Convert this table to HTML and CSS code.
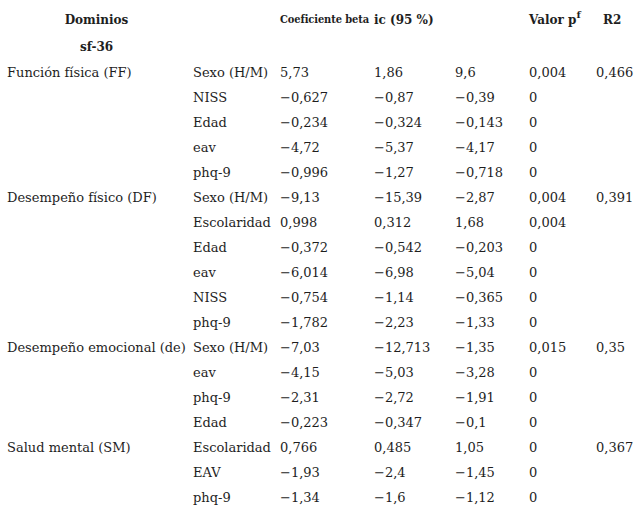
FILE: index.html
```html
<!DOCTYPE html>
<html lang="es">
<head>
<meta charset="utf-8">
<link rel="stylesheet" href="styles.css">
</head>
<body>
<table class="tbl">
  <colgroup>
    <col class="c1"><col class="c2"><col class="c3"><col class="c4"><col class="c5"><col class="c6"><col class="c7">
  </colgroup>
  <thead>
    <tr class="h1">
      <th class="center">Dominios</th>
      <th></th>
      <th class="tight">Coeficiente beta</th>
      <th colspan="2">ic (95 %)</th>
      <th>Valor p<sup>f</sup></th>
      <th class="r2">R2</th>
    </tr>
    <tr class="h2">
      <th class="center">sf-36</th>
      <th></th><th></th><th></th><th></th><th></th><th></th>
    </tr>
  </thead>
  <tbody>
    <tr><td>Función física (FF)</td><td>Sexo (H/M)</td><td>5,73</td><td>1,86</td><td>9,6</td><td>0,004</td><td>0,466</td></tr>
    <tr><td></td><td>NISS</td><td>−0,627</td><td>−0,87</td><td>−0,39</td><td>0</td><td></td></tr>
    <tr><td></td><td>Edad</td><td>−0,234</td><td>−0,324</td><td>−0,143</td><td>0</td><td></td></tr>
    <tr><td></td><td>eav</td><td>−4,72</td><td>−5,37</td><td>−4,17</td><td>0</td><td></td></tr>
    <tr><td></td><td>phq-9</td><td>−0,996</td><td>−1,27</td><td>−0,718</td><td>0</td><td></td></tr>
    <tr><td>Desempeño físico (DF)</td><td>Sexo (H/M)</td><td>−9,13</td><td>−15,39</td><td>−2,87</td><td>0,004</td><td>0,391</td></tr>
    <tr><td></td><td>Escolaridad</td><td>0,998</td><td>0,312</td><td>1,68</td><td>0,004</td><td></td></tr>
    <tr><td></td><td>Edad</td><td>−0,372</td><td>−0,542</td><td>−0,203</td><td>0</td><td></td></tr>
    <tr><td></td><td>eav</td><td>−6,014</td><td>−6,98</td><td>−5,04</td><td>0</td><td></td></tr>
    <tr><td></td><td>NISS</td><td>−0,754</td><td>−1,14</td><td>−0,365</td><td>0</td><td></td></tr>
    <tr><td></td><td>phq-9</td><td>−1,782</td><td>−2,23</td><td>−1,33</td><td>0</td><td></td></tr>
    <tr><td>Desempeño emocional (de)</td><td>Sexo (H/M)</td><td>−7,03</td><td>−12,713</td><td>−1,35</td><td>0,015</td><td>0,35</td></tr>
    <tr><td></td><td>eav</td><td>−4,15</td><td>−5,03</td><td>−3,28</td><td>0</td><td></td></tr>
    <tr><td></td><td>phq-9</td><td>−2,31</td><td>−2,72</td><td>−1,91</td><td>0</td><td></td></tr>
    <tr><td></td><td>Edad</td><td>−0,223</td><td>−0,347</td><td>−0,1</td><td>0</td><td></td></tr>
    <tr><td>Salud mental (SM)</td><td>Escolaridad</td><td>0,766</td><td>0,485</td><td>1,05</td><td>0</td><td>0,367</td></tr>
    <tr><td></td><td>EAV</td><td>−1,93</td><td>−2,4</td><td>−1,45</td><td>0</td><td></td></tr>
    <tr><td></td><td>phq-9</td><td>−1,34</td><td>−1,6</td><td>−1,12</td><td>0</td><td></td></tr>
  </tbody>
</table>
</body>
</html>
```
FILE: styles.css
```css
html, body {
  margin: 0;
  padding: 0;
  background: #fff;
}
body {
  font-family: "DejaVu Serif", "Liberation Serif", serif;
  font-size: 13px;
  color: #1e1e1e;
}
.tbl {
  border-collapse: collapse;
  table-layout: fixed;
  width: 643px;
  margin-top: 6px;
}
.c1 { width: 193px; }
.c2 { width: 87px; }
.c3 { width: 94px; }
.c4 { width: 81px; }
.c5 { width: 74px; }
.c6 { width: 67px; }
.c7 { width: 47px; }
th, td {
  padding: 0;
  text-align: left;
  white-space: nowrap;
  vertical-align: middle;
}
td:first-child {
  padding-left: 7px;
}
th {
  font-weight: bold;
  font-size: 12px;
  height: 27px;
}
th.tight {
  font-stretch: condensed;
  font-size: 11px;
  letter-spacing: -0.1px;
}
th.center {
  text-align: center;
}
th.r2 {
  padding-left: 7px;
}
sup {
  font-size: 10px;
  line-height: 0;
  vertical-align: 6px;
}
td {
  height: 25px;
}
```
